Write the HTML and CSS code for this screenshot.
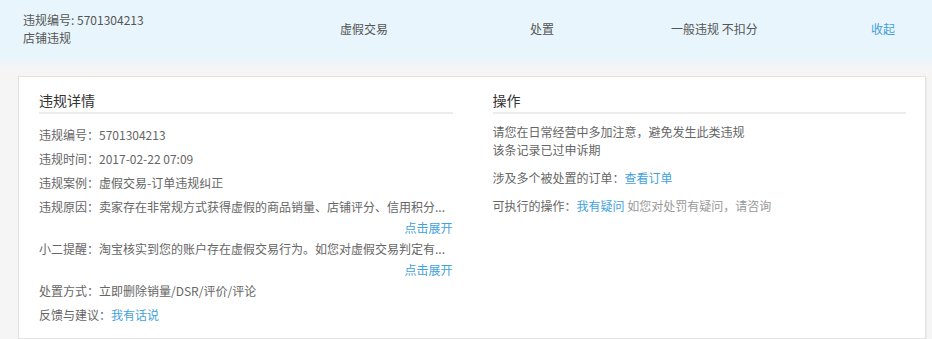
FILE: index.html
```html
<!DOCTYPE html>
<html lang="zh-CN">
  <head>
    <meta charset="UTF-8" />
    <meta name="viewport" content="width=device-width, initial-scale=1.0" />
    <title>违规详情</title>
    <link rel="stylesheet" href="styles.css">
  </head>
  <body>
    <!-- Summary row -->
    <div class="summary">
      <div class="summary-id">
        <div>违规编号: 5701304213</div>
        <div>店铺违规</div>
      </div>
      <div>虚假交易</div>
      <div>处置</div>
      <div>一般违规 不扣分</div>
      <div><a href="#" class="link">收起</a></div>
    </div>

    <!-- Detail card -->
    <div class="wrap">
      <div class="card">
        <div class="col">
          <h3 class="col-title">违规详情</h3>
          <div class="row">违规编号：5701304213</div>
          <div class="row">违规时间：2017-02-22 07:09</div>
          <div class="row">违规案例：虚假交易-订单违规纠正</div>
          <div class="row">违规原因：卖家存在非常规方式获得虚假的商品销量、店铺评分、信用积分...</div>
          <div class="more"><a href="#" class="link">点击展开</a></div>
          <div class="row">小二提醒：淘宝核实到您的账户存在虚假交易行为。如您对虚假交易判定有...</div>
          <div class="more"><a href="#" class="link">点击展开</a></div>
          <div class="row">处置方式：立即删除销量/DSR/评价/评论</div>
          <div class="row">反馈与建议：<a href="#" class="link">我有话说</a></div>
        </div>
        <div class="col">
          <h3 class="col-title">操作</h3>
          <p class="note">请您在日常经营中多加注意，避免发生此类违规<br />该条记录已过申诉期</p>
          <p class="note">涉及多个被处置的订单：<a href="#" class="link">查看订单</a></p>
          <p class="note">可执行的操作：<a href="#" class="link">我有疑问</a> <span class="muted">如您对处罚有疑问，请咨询</span></p>
        </div>
      </div>
    </div>
  </body>
</html>
```

FILE: styles.css
```css
body {
  font-family: "Microsoft YaHei", "Noto Sans CJK SC", sans-serif;
  font-size: 12px;
  color: #666666;
  background-color: #f5f5f5;
  margin: 0;
}
.link {
  color: #3fa2dc;
  text-decoration: none;
}
.summary {
  display: grid;
  grid-template-columns: 317px 190px 141px 200px auto;
  align-items: center;
  height: 66px;
  padding: 0 0 8px 23px;
  box-sizing: border-box;
  background: linear-gradient(#e8f5fc 0, #e8f5fc 58px, #f5f5f5 68px);
  color: #555555;
  line-height: 18px;
}
.wrap {
  padding: 10px 6px 1px 18px;
}
.card {
  display: grid;
  grid-template-columns: 1fr 1fr;
  gap: 40px;
  background-color: #ffffff;
  border: 1px solid #e2e2e2;
  box-shadow: 1px 1px 0 #ececec;
  padding: 13px 19px 11px 20px;
}
.col-title {
  margin: 0 0 9px;
  font-size: 14px;
  font-weight: normal;
  color: #333333;
  line-height: 20px;
  padding-bottom: 2px;
  border-bottom: 2px solid #ececec;
}
.row {
  line-height: 24px;
  white-space: nowrap;
  overflow: hidden;
}
.more {
  line-height: 18px;
  text-align: right;
}
.note {
  margin: 0 0 10px;
  line-height: 18px;
}
.muted {
  color: #999999;
}
```
